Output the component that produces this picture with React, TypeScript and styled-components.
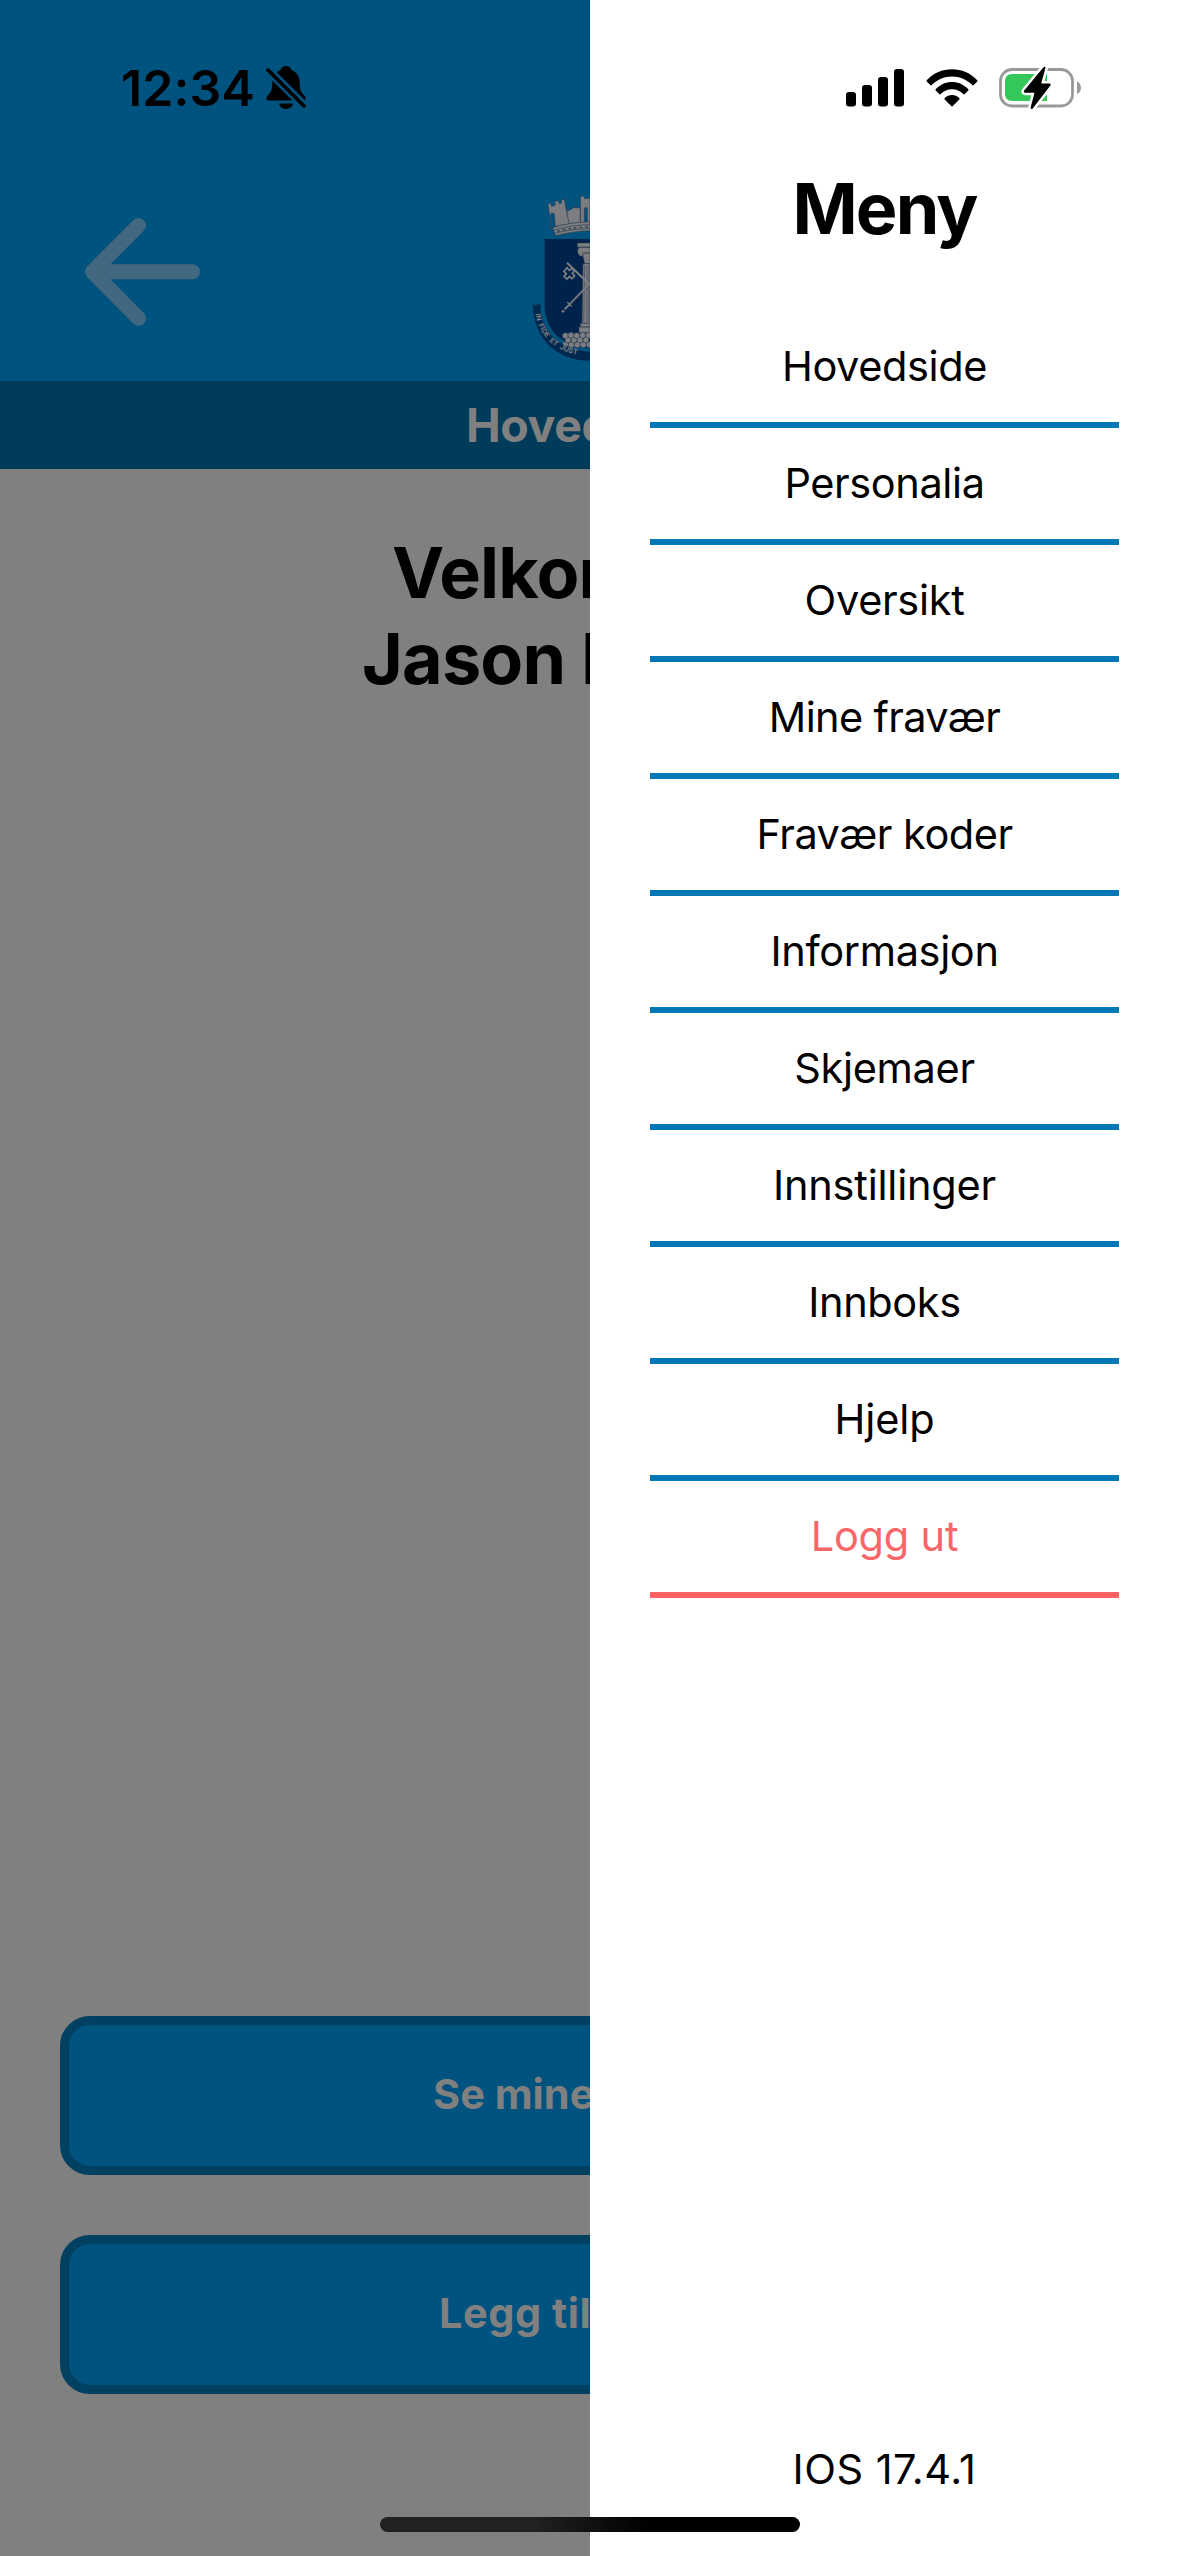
import React from "react";
import styled, { createGlobalStyle } from "styled-components";

const colors = {
  header: "#00527f",
  bar: "#003b5a",
  buttonBorder: "#004060",
  backdrop: "#808080",
  dimText: "#808080",
  line: "#0077b6",
  danger: "#ff6265",
  dangerText: "#f96668",
};

const GlobalStyle = createGlobalStyle`
  * { box-sizing: border-box; }
  body {
    margin: 0;
    background: #fff;
    font-family: Inter, "Liberation Sans", sans-serif;
    color: #000;
  }
`;

const Screen = styled.div`
  position: relative;
  display: flex;
  width: 1179px;
  height: 2556px;
  overflow: hidden;
`;

const Page = styled.main`
  display: flex;
  flex-direction: column;
  width: 590px;
  height: 100%;
  overflow: hidden;
  background: ${colors.backdrop};
  white-space: nowrap;
`;

const Header = styled.header`
  display: flex;
  flex-direction: column;
  height: 381px;
  background: ${colors.header};
`;

const StatusLeft = styled.div`
  display: flex;
  align-items: center;
  gap: 11px;
  height: 176px;
  padding-left: 121px;
`;

const Clock = styled.time`
  font-size: 50px;
  font-weight: 600;
  letter-spacing: 0.1px;
  line-height: 60px;
  width: 134px;
`;

const NavRow = styled.div`
  display: flex;
  justify-content: space-between;
  padding: 14px 0 0 80px;
`;

const BackButton = styled.button`
  display: flex;
  padding: 25px 0 0;
  border: 0;
  background: none;
`;

const TitleBar = styled.div`
  height: 88px;
  padding-left: 466px;
  background: ${colors.bar};
  color: ${colors.dimText};
  font-size: 46.5px;
  font-weight: 700;
  letter-spacing: -0.4px;
  line-height: 88px;
`;

const Greeting = styled.h1`
  flex: 1;
  margin: 0;
  padding-top: 61px;
  font-size: 70px;
  font-weight: 700;
  line-height: 86px;
`;

const GreetingLine = styled.span<{ $indent: number; $spacing: number }>`
  display: block;
  padding-left: ${(p) => p.$indent}px;
  letter-spacing: ${(p) => p.$spacing}px;
`;

const Actions = styled.div`
  display: flex;
  flex-direction: column;
  gap: 60px;
  padding: 0 0 162px 60px;
`;

const ActionButton = styled.button<{ $indent: number; $spacing: number }>`
  width: 1059px;
  height: 159px;
  padding: 0 0 3px ${(p) => p.$indent}px;
  border: 9px solid ${colors.buttonBorder};
  border-radius: 30px;
  background: ${colors.header};
  color: ${colors.dimText};
  font: 650 41.5px Inter, sans-serif;
  letter-spacing: ${(p) => p.$spacing}px;
  text-align: left;
`;

const Drawer = styled.aside`
  display: flex;
  flex-direction: column;
  width: 589px;
  height: 100%;
  padding: 0 60px;
  background: #fff;
`;

const StatusRight = styled.div`
  display: flex;
  align-items: center;
  gap: 21px;
  height: 166px;
  padding: 10px 0 0 195px;

  svg {
    flex: none;
  }
`;

const MenuTitle = styled.h2`
  height: 86px;
  margin: 0;
  font-size: 70px;
  font-weight: 700;
  letter-spacing: -1.8px;
  line-height: 86px;
  text-align: center;
`;

const MenuList = styled.nav`
  display: flex;
  flex: 1;
  flex-direction: column;
  padding-top: 59px;
`;

const MenuItem = styled.a<{ $danger?: boolean; $spacing?: number }>`
  height: 117px;
  padding-top: 28px;
  border-bottom: 6px solid ${(p) => (p.$danger ? colors.danger : colors.line)};
  color: ${(p) => (p.$danger ? colors.dangerText : "#000")};
  font-size: 41.5px;
  letter-spacing: ${(p) => p.$spacing ?? 0}px;
  line-height: 54px;
  text-align: center;
`;

const Version = styled.footer`
  height: 113px;
  font-size: 41.5px;
  letter-spacing: 0.5px;
  line-height: 52px;
  text-align: center;
`;

const HomeIndicator = styled.div`
  position: absolute;
  bottom: 24px;
  left: 380px;
  width: 420px;
  height: 15px;
  border-radius: 8px;
  background: linear-gradient(90deg, #222 0%, #222 36%, #000 64%);
`;

const BellOff = () => (
  <svg width="40" height="44" viewBox="0 0 40 44">
    <path
      d="M20 0c-3 0-5 1.800-5.600 4.300C8.800 6.200 6.500 11 6.300 17c-.2 7-1 8.600-3.800 11.500C.8 30.300.2 31.400.3 32.600c.1 1.300 1 1.900 2.400 1.900h34.600c1.400 0 2.300-.6 2.400-1.900.1-1.200-.5-2.300-2.200-4.100C34.700 25.600 33.900 24 33.700 17c-.2-6-2.500-10.800-8.100-12.700C25 1.800 23 0 20 0z"
    />
    <path d="M13 37.500h14c-.8 3.300-3.500 5.500-7 5.500s-6.200-2.200-7-5.500z" />
    <path d="M0 2L38 39.500" stroke={colors.header} strokeWidth="9" />
    <path d="M2 4l36 36" stroke="#000" strokeWidth="3.800" strokeLinecap="round" />
  </svg>
);

const Signal = () => (
  <svg width="60" height="38" viewBox="0 0 60 38">
    <rect x="1" y="23" width="10" height="14.500" rx="3" />
    <rect x="17" y="16" width="10" height="21.500" rx="3" />
    <rect x="33" y="8" width="10" height="29.500" rx="3" />
    <rect x="49" y="0" width="10" height="37.500" rx="3" />
  </svg>
);

const Wifi = () => (
  <svg width="52" height="38" viewBox="0 0 52 38">
    <path d="M.7 11.200C7.500 4 16.300.2 26 .2S44.500 4 51.300 11.200c.4.400.4.900 0 1.300l-3.600 3.600c-.4.400-1 .4-1.400 0C40.800 10.500 33.800 7.500 26 7.500S11.200 10.500 5.700 16.100c-.4.400-1 .4-1.400 0L.7 12.500c-.4-.4-.4-.9 0-1.300z" />
    <path d="M9.700 20.200C14.200 15.600 19.700 13 26 13s11.800 2.600 16.300 7.200c.4.400.4 1 0 1.400l-3.500 3.500c-.4.400-1 .4-1.400 0C34.200 22 30.400 20.300 26 20.300S17.800 22 14.600 25.100c-.4.400-1 .4-1.400 0l-3.500-3.500c-.4-.4-.4-1 0-1.400z" />
    <path d="M18.700 29c2-1.900 4.400-3 7.300-3s5.300 1.100 7.300 3c.4.400.4 1 0 1.400l-6.500 6.600c-.4.500-1.100.5-1.600 0l-6.500-6.600c-.4-.4-.4-1 0-1.400z" />
  </svg>
);

const Battery = () => (
  <svg width="84" height="44" viewBox="0 0 84 44">
    <rect x="1.500" y="3.500" width="72" height="36.500" rx="11.500" fill="none" stroke="#999" strokeWidth="2.800" />
    <path d="M78 15.500c2.600 1 4 3.500 4 6.200s-1.400 5.200-4 6.200z" fill="#999" />
    <path d="M13 8h35v27H13c-4.500 0-7-3-7-7V15c0-4 2.500-7 7-7z" fill="#34c759" />
    <path
      d="M44.500 1.200L25.200 24.500c-.8 1-.2 2.200 1 2.200h9.300l-3.800 14.600c-.5 1.500 1 2.200 2 1.100l17.700-22.800c.8-1 .2-2.100-1-2.100h-8.200l4.200-15.200c.4-1.500-.9-2.200-1.900-1.100z"
      stroke="#fff"
      strokeWidth="5"
      paintOrder="stroke"
    />
  </svg>
);

const BackArrow = () => (
  <svg width="125" height="120" viewBox="0 0 125 120">
    <path
      d="M58.500 10.500L12.500 56.700l46 46.600M12.500 56.700h100"
      fill="none"
      stroke="#41687f"
      strokeWidth="15"
      strokeLinecap="round"
      strokeLinejoin="round"
    />
  </svg>
);

const stones = [
  [196, 494], [214, 494], [232, 494], [250, 494], [268, 494],
  [204, 480], [222, 480], [240, 480], [258, 480],
  [196, 467], [213, 466], [230, 467], [248, 466], [266, 466],
];

const CoatOfArms = () => (
  <svg width="60" height="174" viewBox="90 30 180 522">
    <g fill="#7b7d80" stroke="#2b3d50" strokeWidth="2">
      <path d="M201 93l16-7 1-4 11 1 12 1v50h-42z" />
      <path d="M144 71l8-2 3 10 10-3-1-12 10-2 4 9 7-2-1-10 9-2 8 45 7 30-42 8-3-36c-2-8-12-6-12 2l4 38-1 6z" />
      <path d="M241 50l10-3 3 9 16-2v76l-8 1V88c-2-8-8-8-9 0v44l-11 1z" />
      <path d="M157 143c34-11 74-17 113-18v27c-36 1-72 7-103 15z" />
      <path d="M160 151c34-10 72-16 110-17M163 160c34-9 70-14 107-15" fill="none" />
      <path d="M172 153h7M188 149h8M206 146h7M222 144h7M239 142h7M256 141h7" strokeWidth="4" />
    </g>
    <path d="M134 177h136v328c-76-4-132-46-136-124z" fill="#00234c" />
    <g fill="#7b7d80" stroke="#26384f" strokeWidth="1.500">
      <path d="M232 189h38v12h-38zM237 202h33v17h-18c3 7-7 13-14 7-7-7-6-17-1-24zM247 219h23v32h-16z" />
      <path d="M249 251h21v179h-24z" />
      <path d="M254 256l-3 170M261 256v170M267 256v170" fill="none" />
      <path d="M241 430h29v11h-29zM237 441h33v17h-33z" />
      {stones.map(([x, y]) => (
        <circle key={`${x}-${y}`} cx={x} cy={y} r="9" />
      ))}
    </g>
    <g fill="none" stroke="#7b7d80">
      <path d="M201 248l69 67" strokeWidth="6" />
      <path d="M201 263l7 8 8-6 7 8-6 7 7 8-8 8-8-7-7 8-9-8 7-8-7-7z" strokeWidth="5" />
      <path d="M270 310l-76 78" strokeWidth="6" />
      <path d="M202 366l13 14" strokeWidth="4" />
      <circle cx="189" cy="394" r="4" fill="#7b7d80" stroke="none" />
      <path d="M212 371l58-55" stroke="#26384f" strokeWidth="1" />
    </g>
    <path
      d="M98 371l9 6 6-5 10 2-2 11C124 455 180 511 270 515v27C170 542 100 476 98 371z"
      fill="#00284f"
    />
    <path id="motto" d="M106 402C119 476 175 532 300 531" fill="none" />
    <text fill="#7b7d80" fontSize="21.500" fontWeight="700" wordSpacing="6" fontFamily="Inter, sans-serif">
      <textPath href="#motto">IN FIDE ET JUST</textPath>
    </text>
  </svg>
);

const menuItems: { label: string; spacing: number }[] = [
  { label: "Hovedside", spacing: -0.4 },
  { label: "Personalia", spacing: -0.4 },
  { label: "Oversikt", spacing: -0.3 },
  { label: "Mine fravær", spacing: -0.65 },
  { label: "Fravær koder", spacing: -0.5 },
  { label: "Informasjon", spacing: -0.35 },
  { label: "Skjemaer", spacing: -0.35 },
  { label: "Innstillinger", spacing: -0.2 },
  { label: "Innboks", spacing: -0.4 },
  { label: "Hjelp", spacing: -0.1 },
];

export default function App() {
  return (
    <Screen>
      <GlobalStyle />
      <Page>
        <Header>
          <StatusLeft>
            <Clock>12:34</Clock>
            <BellOff />
          </StatusLeft>
          <NavRow>
            <BackButton aria-label="Tilbake">
              <BackArrow />
            </BackButton>
            <CoatOfArms />
          </NavRow>
        </Header>
        <TitleBar>Hoved</TitleBar>
        <Greeting>
          <GreetingLine $indent={392} $spacing={-0.8}>Velkom</GreetingLine>
          <GreetingLine $indent={362} $spacing={-0.8}>Jason H</GreetingLine>
        </Greeting>
        <Actions>
          <ActionButton $indent={364} $spacing={0}>Se mine</ActionButton>
          <ActionButton $indent={370} $spacing={0.5}>Legg til</ActionButton>
        </Actions>
      </Page>
      <Drawer>
        <StatusRight>
          <Signal />
          <Wifi />
          <Battery />
        </StatusRight>
        <MenuTitle>Meny</MenuTitle>
        <MenuList>
          {menuItems.map((item) => (
            <MenuItem key={item.label} $spacing={item.spacing}>
              {item.label}
            </MenuItem>
          ))}
          <MenuItem $danger $spacing={-0.2}>Logg ut</MenuItem>
        </MenuList>
        <Version>IOS 17.4.1</Version>
      </Drawer>
      <HomeIndicator />
    </Screen>
  );
}
